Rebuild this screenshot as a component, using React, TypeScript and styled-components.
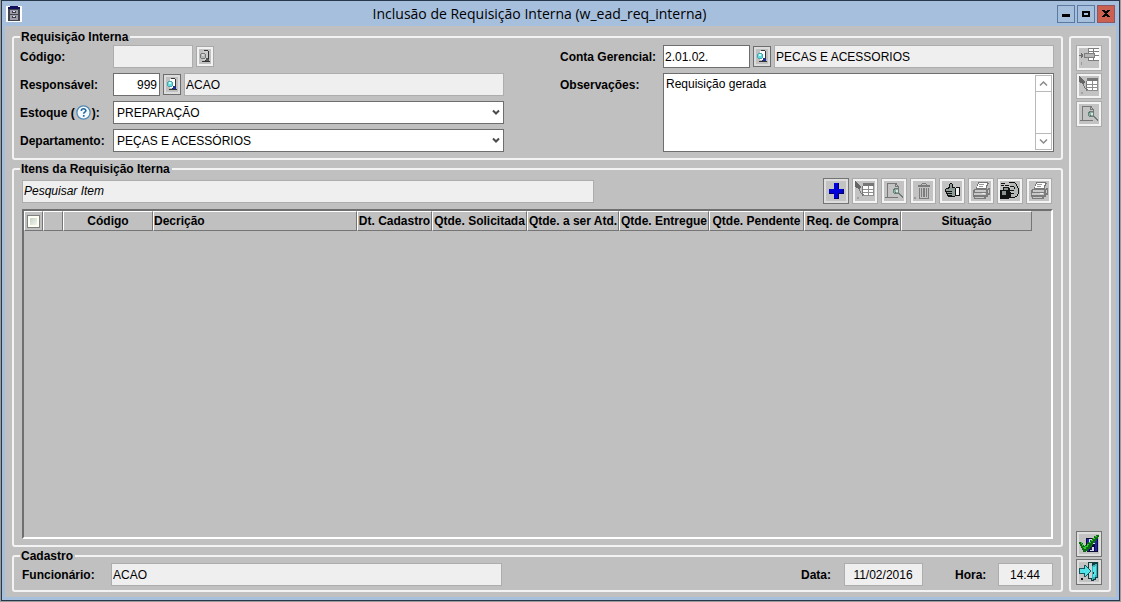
import React from "react";
import styled, { createGlobalStyle } from "styled-components";

const GlobalStyle = createGlobalStyle`
  *, *::before, *::after { box-sizing: border-box; }
  body {
    margin: 0;
    background: #9b9b9b;
    color: #000;
    font: 12px/14px "Liberation Sans", Arial, sans-serif;
  }
  button, input, select, textarea { font: inherit; color: inherit; }
`;

const AppWindow = styled.div`
  display: flex;
  flex-direction: column;
  min-height: calc(100vh - 1px);
  margin: 0 1px 1px;
  padding: 0 3px 3px;
  border: 1px solid #27374c;
  background: #a6bfdd;
`;

const TitleBar = styled.header`
  display: flex;
  align-items: center;
  height: 25px;
  padding: 0 1px;
`;

const Title = styled.h1`
  flex: 1;
  margin: 0;
  text-align: center;
  font: 400 14px/20px "Open Sans", "Noto Sans", sans-serif;
`;

const WindowButtons = styled.div`
  display: flex;
  gap: 2px;
`;

const WindowButton = styled.button<{ $close?: boolean }>`
  display: grid;
  place-items: center;
  width: 18px;
  height: 18px;
  padding: 0;
  border: 1px solid ${(p) => (p.$close ? "#8f5560" : "#5b789f")};
  background: ${(p) => (p.$close ? "#cb5f50" : "#a6bfdd")};
`;

const Body = styled.div`
  flex: 1;
  display: flex;
  gap: 6px;
  padding: 4px 5px 5px 7px;
  background: #c0c0c0;
`;

const Main = styled.main`
  flex: 1;
  min-width: 0;
  display: flex;
  flex-direction: column;
  gap: 2px;
`;

const Group = styled.fieldset<{ $grow?: boolean }>`
  flex: ${(p) => (p.$grow ? "1" : "none")};
  min-width: 0;
  margin: 0;
  padding: 0 7px 6px 6px;
  border: 2px solid #f3f3f3;
  border-radius: 3px;
`;

const Legend = styled.legend`
  padding: 0 2px 0 1px;
  font-weight: 700;
`;

const Sidebar = styled.aside`
  display: flex;
  flex-direction: column;
  gap: 2px;
  width: 42px;
  margin-top: 6px;
  padding: 7px 5px 5px;
  border: 2px solid #f3f3f3;
  border-radius: 3px;
`;

const SidebarSpacer = styled.div`
  flex: 1;
`;

const FormColumns = styled.div`
  display: grid;
  grid-template-columns: 484fr 494fr;
  column-gap: 56px;
  padding-top: 1px;
`;

const FormColumn = styled.div`
  display: flex;
  flex-direction: column;
  gap: 5px;
  min-width: 0;
`;

const FormRow = styled.div`
  display: flex;
  align-items: flex-start;
`;

const Label = styled.label<{ $width: number }>`
  flex: none;
  display: flex;
  align-items: center;
  width: ${(p) => p.$width}px;
  height: 23px;
  font-weight: 700;
  white-space: nowrap;
`;

const Fields = styled.div`
  flex: 1;
  min-width: 0;
  display: flex;
  align-items: center;
  gap: 3px;
`;

const TextInput = styled.input<{ $width?: number; $align?: string }>`
  flex: ${(p) => (p.$width ? "0 1 auto" : "1")};
  width: ${(p) => (p.$width ? `${p.$width}px` : "auto")};
  min-width: 0;
  height: 23px;
  padding: 0 2px 0 1px;
  border: 1px solid #6e6e6e;
  border-radius: 0;
  background: #fff;
  text-align: ${(p) => p.$align ?? "left"};
  &:read-only {
    border-color: #adadad;
    background: #efefef;
  }
  &::placeholder {
    color: #000;
    font-style: italic;
  }
`;

const SelectBox = styled.div`
  position: relative;
  flex: 1;
  min-width: 0;
  svg {
    position: absolute;
    right: 4px;
    top: 8px;
    pointer-events: none;
  }
`;

const Select = styled.select`
  display: block;
  appearance: none;
  width: 100%;
  height: 23px;
  padding: 0 20px 0 3px;
  border: 1px solid #6e6e6e;
  border-radius: 0;
  background: #fff;
`;

const LookupButton = styled.button`
  flex: none;
  display: grid;
  place-items: center;
  width: 18px;
  height: 21px;
  padding: 0;
  border: 1px solid #6e6e6e;
  background: #dcdcdc;
  &:disabled {
    border-color: #a8a8a8;
    background: #f2f2f2;
  }
`;

const HelpButton = styled.button`
  display: grid;
  padding: 0;
  margin: 0 1px;
  border: 0;
  background: none;
`;

const NotesBox = styled.div`
  flex: 1;
  min-width: 0;
  display: flex;
  height: 79px;
  padding: 1px;
  border: 1px solid #6e6e6e;
  background: #fff;
`;

const Notes = styled.textarea`
  flex: 1;
  min-width: 0;
  padding: 2px 1px;
  border: 0;
  background: none;
  resize: none;
  overflow: hidden;
`;

const ScrollTrack = styled.div`
  display: flex;
  flex-direction: column;
  justify-content: space-between;
  width: 17px;
  border: 1px solid #b9b9b9;
`;

const ScrollButton = styled.button<{ $end?: boolean }>`
  display: grid;
  place-items: center;
  height: 16px;
  padding: 0;
  border: 0 solid #b9b9b9;
  border-width: ${(p) => (p.$end ? "1px 0 0" : "0 0 1px")};
  background: #fff;
`;

const ItemsPanel = styled.div`
  display: flex;
  flex-direction: column;
  gap: 5px;
  height: 100%;
  padding: 2px 1px 0 2px;
`;

const Toolbar = styled.div`
  display: flex;
  align-items: center;
  justify-content: space-between;
  padding-right: 1px;
`;

const ToolButtons = styled.div`
  display: flex;
  gap: 3px;
`;

const ToolButton = styled.button<{ $raised?: boolean }>`
  flex: none;
  display: grid;
  place-items: center;
  width: 26px;
  height: 26px;
  padding: 0;
  border: 1px solid ${(p) => (p.$raised ? "#747474" : "#ababab")};
  background: #c3c3c3;
  box-shadow: inset 0 0 0 2px ${(p) => (p.$raised ? "#dedede" : "#f3f3f3")};
`;

const GridBox = styled.div`
  flex: 1;
  overflow: hidden;
  border: 2px solid;
  border-color: #6f6f6f #fff #fff #6f6f6f;
`;

const Grid = styled.table`
  width: 1008px;
  table-layout: fixed;
  border-collapse: separate;
  border-spacing: 0;
`;

const HeadCell = styled.th<{ $left?: boolean }>`
  height: 20px;
  padding: 0;
  border: 1px solid;
  border-color: #fff #757575 #757575 #fff;
  text-align: ${(p) => (p.$left ? "left" : "center")};
  white-space: nowrap;
`;

const CheckBox = styled.input`
  appearance: none;
  display: block;
  width: 13px;
  height: 13px;
  margin: 0 auto;
  border: 1px solid #7f7f7f;
  background: linear-gradient(135deg, #b9c8bd, #fffff8);
  box-shadow: inset 0 0 0 2px #fffff4;
`;

const FooterRow = styled.div`
  display: flex;
  justify-content: space-between;
  gap: 32px;
  padding: 0 1px 0 2px;
  margin-bottom: -2px;
`;

const FooterFields = styled.div`
  display: flex;
  gap: 32px;
`;

const FooterField = styled.div`
  display: flex;
  min-width: 0;
`;

const Svg = ({ size = 20, w, h, children }: { size?: number; w?: number; h?: number; children: React.ReactNode }) => (
  <svg width={w ?? size} height={h ?? size} viewBox={`0 0 ${w ?? size} ${h ?? size}`} shapeRendering="crispEdges" aria-hidden="true">
    {children}
  </svg>
);

const CabinetIcon = () => (
  <Svg w={16} h={16}>
    <path fill="#fff" d="M0 0h16v16H0z" />
    <path fill="#10105c" d="M4 0h8v1h2v2H2V1h2z" />
    <path fill="#44444e" d="M2 3h12v12H2z" />
    <path fill="#9c9cab" d="M4 4h8v4H4zM4 9h8v5H4z" />
    <path fill="#3c3c46" d="M6 5h4v2H6zM6 10h4v2H6z" />
    <path fill="#e3e3ec" d="M7 5h2v1H7zM7 10h2v1H7z" />
  </Svg>
);

const ChevronIcon = () => (
  <svg width="8" height="7" viewBox="0 0 8 7" aria-hidden="true">
    <path d="M1 1.5 4 4.5 7 1.5" fill="none" stroke="#4b4b4b" strokeWidth="2" />
  </svg>
);

const ScrollArrow = ({ up }: { up?: boolean }) => (
  <svg width="9" height="7" viewBox="0 0 9 7" aria-hidden="true">
    <path d={up ? "M1 5.5 4.5 2 8 5.5" : "M1 1.5 4.5 5 8 1.5"} fill="none" stroke="#8a8a8a" strokeWidth="1.5" />
  </svg>
);

const HelpIcon = () => (
  <svg width="15" height="15" viewBox="0 0 15 15" aria-hidden="true">
    <circle cx="7.5" cy="7.5" r="6.6" fill="#f3f9fd" stroke="#5289b4" strokeWidth="1.3" />
    <path d="M5.3 6c0-3 4.6-2.8 4.6-.3 0 1.5-2.2 1.5-2.2 3.1" fill="none" stroke="#2468a0" strokeWidth="1.6" />
    <path d="M6.9 10h1.7v1.7H6.9z" fill="#2468a0" />
  </svg>
);

const LookupIcon = ({ muted }: { muted?: boolean }) => (
  <Svg w={12} h={15}>
    <path fill="#c0c0c0" d="M0 0h12v15H0z" />
    <path fill={muted ? "#cdcdcd" : "#fff"} d="M4 2h5v1h1v8H4z" />
    <path fill="#333" d="M5 1h4v1H5zM9 2h1v1H9zM9 3h1v8H9zM7 10h1v1H7zM6 11h1v1H6zM3 12h8v1H3z" />
    <path fill={muted ? "#777" : "#4aa5ae"} d="M2 4h4v1H2zM1 5h1v4H1zM6 5h1v4H6zM2 9h4v1H2z" />
    <path fill={muted ? "#b4bab6" : "#5fe0df"} d="M2 5h4v4H2z" />
    <path fill={muted ? "#d8d8d8" : "#d6ffff"} d="M3 5h2v2H3z" />
    <path fill={muted ? "#555" : "#1b2f9c"} d="M7 9h2v1h1v2H7z" />
  </Svg>
);

const InsertRowIcon = () => (
  <Svg>
    <path fill="#fff" d="M9 1h11v12H9z" />
    <path fill="#7d7d7d" d="M9 0h11v1H9zM9 3h11v1H9zM9 12h11v1H9zM9 0h1v13H9zM14 0h1v13h-1zM16 7h4v1h-4z" />
    <path fill="#7d7d7d" d="M5 5h11v5H5z" />
    <path fill="#b5b5b5" d="M6 6h9v3H6z" />
    <path fill="#6c6c6c" d="M0 7h2V5h1v1h1v3H3v1H2V8H0z" />
    <path fill="#999" d="M2 14h1v3H2z" />
  </Svg>
);

const EditRowIcon = () => (
  <Svg>
    <path fill="#777" d="M8 2h11v3H8zM7 5h1v10H7z" />
    <path fill="#fff" d="M8 5h11v10H8z" />
    <path fill="#8e8e8e" d="M8 8h11v1H8zM8 11h11v1H8zM8 14h11v1H8zM13 5h1v10h-1zM18 5h1v10h-1z" />
    <path fill="#666" d="M0 0h1v1h1v1h1v1h1v1h1v1h1v2H5v1H3V7H1V6H0z" />
    <path fill="#777" d="M4 8h1v2H4zM5 10h1v2H5zM6 12h2v1H6zM8 13h1v1H8z" />
    <path fill="#a2a2a2" d="M2 16h2v2H2z" />
  </Svg>
);

const PreviewIcon = () => (
  <Svg>
    <path fill="#777" d="M3 2h10v1H3zM3 2h1v14H3zM1 16h13v1H1zM12 3h1v1h-1zM13 4h1v1h-1zM14 5h1v3h-1zM11 3h1v3h-1zM11 5h3v1h-3z" />
    <path fill="#6f7c77" d="M10 7h4v1h-4zM9 8h1v4H9zM14 8h1v4h-1zM10 12h5v1h-5zM15 12h1v1h-1zM16 13h1v1h-1zM17 14h1v1h-1zM18 15h1v2h-1zM15 13h1v1h-1zM16 14h1v1h-1zM17 15h1v1h-1z" />
    <path fill="#8cafa4" d="M10 8h4v4h-4z" />
    <path fill="#d4e7e0" d="M12 9h2v2h-2z" />
    <path fill="#3a7a66" d="M10 8h1v1h-1zM11 11h1v1h-1z" />
  </Svg>
);

const PlusIcon = () => (
  <Svg>
    <path fill="#00006c" d="M8 2h5v6h5v5h-5v5H8v-5H3V8h5z" />
    <path fill="#0000d8" d="M8 2h4v6h5v4h-5v5H8v-5H3V8h5z" />
  </Svg>
);

const TrashIcon = () => (
  <Svg>
    <path fill="#7c7c7c" d="M9 2h4v1H9zM8 3h1v1H8zM13 3h1v1h-1zM5 4h12v2H5zM6 7h1v10H6zM15 7h1v10h-1zM6 17h10v1H6zM8 7h1v9H8zM10 7h2v9h-2zM13 7h1v9h-1z" />
    <path fill="#999" d="M1 16h2v2H1z" />
  </Svg>
);

const HandIcon = () => (
  <Svg>
    <path fill="#111" d="M8 2h2v1h1v3h2v1h1v8h-1v1H6v-1H5v-2H4v-2H3V8h1V7h2V6h1V3h1z" />
    <path fill="#8d9c94" d="M8 3h2v4h3v1h-6V7h1zM4 8h9v2H4zM5 11h8v1H5zM6 13h7v1H6zM10 8h3v7h-3z" />
    <path fill="#111" d="M14 6h4v9h-4z" />
    <path fill="#f3f3f3" d="M14 7h3v7h-3z" />
  </Svg>
);

const PrinterIcon = () => (
  <Svg>
    <path fill="#777" d="M7 1h10v1h1v1h-1v2h-1v3H5V6h1V3h1z" />
    <path fill="#fff" d="M8 2h8v2h-1v3H6V5h1V3h1z" />
    <path fill="#999" d="M8 3h5v1H8zM8 5h4v1H8z" />
    <path fill="#7b7b7b" d="M3 8h14v-1h2v7h-2v2h-2v2H3v-2H2V9h1z" />
    <path fill="#c8c8c8" d="M4 9h11v2H4zM3 12h12v2H3zM4 16h9v1H4zM17 9h1v3h-1z" />
    <path fill="#eee" d="M11 12h3v1h-3z" />
  </Svg>
);

const PackageHandIcon = () => (
  <Svg>
    <path fill="#111" d="M1 2h4v1H1zM1 4h3v1H1zM5 4h4v1H5zM9 1h6v1H9zM15 2h1v1h-1zM16 3h1v2h-1zM17 5h1v2h-1zM18 7h1v6h-1zM17 13h1v2h-1zM15 15h2v1h-2zM9 16h6v1H9zM0 16h9v2H0zM0 9h1v8H0z" />
    <path fill="#111" d="M3 6h6v1h1v4h1v5H1V9h2z" />
    <path fill="#b4b8b6" d="M10 2h5v1h1v2h1v2h1v6h-1v2h-2v1h-4v-4h3v-1h-3V7h3V6h-4z" />
    <path fill="#8a938f" d="M4 7h4v2H4zM2 10h4v4H2z" />
    <path fill="#111" d="M10 5h4v1h-4zM14 6h1v2h-1zM9 9h5v1H9zM10 12h4v1h-4z" />
  </Svg>
);

const SaveIcon = () => (
  <Svg>
    <path fill="#0a0a35" d="M7 4h12v14H8v-1H7z" />
    <path fill="#2222b0" d="M8 5h2v12H8zM16 5h2v12h-2z" />
    <path fill="#d9d9ec" d="M10 5h6v5h-6zM11 13h4v4h-4z" />
    <path fill="#20204e" d="M11 13h2v3h-2z" />
    <path fill="#0c6a14" d="M0 8h3v1h1v2h1v1h1v-1h2V9h1V8h2V6h2V4h2V2h2V1h3v2h-1v2h-2v2h-1v2h-2v2h-1v2h-2v2H9v2H7v1H4v-2H3v-2H2v-2H1v-2H0z" />
    <path fill="#31c92f" d="M1 8h2v2h1v3h2v-1h2v-2h2V8h2V6h2V4h2V2h2v1h-2v2h-2v2h-2v2h-2v2H9v2H7v2H5v-1H4v-2H3v-2H2v-2H1z" />
  </Svg>
);

const ExitIcon = () => (
  <Svg>
    <path fill="#123c40" d="M9 0h10v16h-2v2h-2v1h-3v-2H9z" />
    <path fill="#c9d2d2" d="M10 1h3v15h-3z" />
    <path fill="#2fb5bb" d="M13 4h1V3h2V2h2v13h-2v2h-2v1h-1z" />
    <path fill="#5de3e6" d="M14 5h2V4h1v9h-1v2h-2z" />
    <path fill="#102c30" d="M14 10h1v2h-1z" />
    <path fill="#14565c" d="M5 3h2v1h1v1h1v1h1v1h1v1h1v2h-1v1h-1v1H9v1H8v1H7v1H5v-3H0V6h5z" />
    <path fill="#52e4e8" d="M6 4h1v1h1v1h1v1h1v1h1v2h-1v1H9v1H8v1H7v1H6v-3H1V7h5z" />
    <path fill="#111" d="M2 16h2v2H2z" />
  </Svg>
);

const columns: { label: string; width: number; left?: boolean }[] = [
  { label: "", width: 20 },
  { label: "Código", width: 90 },
  { label: "Decrição", width: 204, left: true },
  { label: "Dt. Cadastro", width: 75 },
  { label: "Qtde. Solicitada", width: 95 },
  { label: "Qtde. a ser Atd.", width: 92 },
  { label: "Qtde. Entregue", width: 90 },
  { label: "Qtde. Pendente", width: 95 },
  { label: "Req. de Compra", width: 97 },
  { label: "Situação", width: 131 },
];

const itemTools: { label: string; icon: React.ReactNode; raised?: boolean }[] = [
  { label: "Adicionar item", icon: <PlusIcon />, raised: true },
  { label: "Editar item", icon: <EditRowIcon /> },
  { label: "Visualizar item", icon: <PreviewIcon /> },
  { label: "Excluir item", icon: <TrashIcon /> },
  { label: "Atender item", icon: <HandIcon /> },
  { label: "Imprimir", icon: <PrinterIcon /> },
  { label: "Entregar item", icon: <PackageHandIcon /> },
  { label: "Imprimir requisição", icon: <PrinterIcon /> },
];

export default function App() {
  return (
    <>
      <GlobalStyle />
      <AppWindow>
        <TitleBar>
          <CabinetIcon />
          <Title>Inclusão de Requisição Interna (w_ead_req_interna)</Title>
          <WindowButtons>
            <WindowButton aria-label="Minimizar">
              <Svg w={10} h={8}><path d="M1 4h8v3H1z" /></Svg>
            </WindowButton>
            <WindowButton aria-label="Maximizar">
              <Svg w={10} h={8}><path fillRule="evenodd" d="M1 1h8v6H1zM3 3v2h4V3z" /></Svg>
            </WindowButton>
            <WindowButton $close aria-label="Fechar">
              <Svg w={10} h={8}><path d="M1 0h3v1h2V0h3v1H8v1H7v1H6v1h1v1h1v1h1v1H6V6H4v1H1V6h1V5h1V4h1V3H3V2H2V1H1z" /></Svg>
            </WindowButton>
          </WindowButtons>
        </TitleBar>

        <Body>
          <Main>
            <Group>
              <Legend>Requisição Interna</Legend>
              <FormColumns>
                <FormColumn>
                  <FormRow>
                    <Label $width={93} htmlFor="codigo">Código:</Label>
                    <Fields>
                      <TextInput id="codigo" $width={80} readOnly />
                      <LookupButton disabled aria-label="Buscar código"><LookupIcon muted /></LookupButton>
                    </Fields>
                  </FormRow>
                  <FormRow>
                    <Label $width={93} htmlFor="responsavel">Responsável:</Label>
                    <Fields>
                      <TextInput id="responsavel" $width={47} $align="right" defaultValue="999" />
                      <LookupButton aria-label="Buscar responsável"><LookupIcon /></LookupButton>
                      <TextInput aria-label="Nome do responsável" readOnly value="ACAO" />
                    </Fields>
                  </FormRow>
                  <FormRow>
                    <Label $width={93} as="div">
                      <label htmlFor="estoque">Estoque (</label>
                      <HelpButton aria-label="Ajuda"><HelpIcon /></HelpButton>
                      <span>):</span>
                    </Label>
                    <SelectBox>
                      <Select id="estoque"><option>PREPARAÇÃO</option></Select>
                      <ChevronIcon />
                    </SelectBox>
                  </FormRow>
                  <FormRow>
                    <Label $width={93} htmlFor="departamento">Departamento:</Label>
                    <SelectBox>
                      <Select id="departamento"><option>PEÇAS E ACESSÓRIOS</option></Select>
                      <ChevronIcon />
                    </SelectBox>
                  </FormRow>
                </FormColumn>

                <FormColumn>
                  <FormRow>
                    <Label $width={103} htmlFor="conta">Conta Gerencial:</Label>
                    <Fields>
                      <TextInput id="conta" $width={87} defaultValue="2.01.02." />
                      <LookupButton aria-label="Buscar conta"><LookupIcon /></LookupButton>
                      <TextInput aria-label="Descrição da conta" readOnly value="PECAS E ACESSORIOS" />
                    </Fields>
                  </FormRow>
                  <FormRow>
                    <Label $width={103} htmlFor="observacoes">Observações:</Label>
                    <NotesBox>
                      <Notes id="observacoes" defaultValue="Requisição gerada" />
                      <ScrollTrack>
                        <ScrollButton aria-label="Rolar para cima"><ScrollArrow up /></ScrollButton>
                        <ScrollButton $end aria-label="Rolar para baixo"><ScrollArrow /></ScrollButton>
                      </ScrollTrack>
                    </NotesBox>
                  </FormRow>
                </FormColumn>
              </FormColumns>
            </Group>

            <Group $grow>
              <Legend>Itens da Requisição Iterna</Legend>
              <ItemsPanel>
                <Toolbar>
                  <TextInput $width={572} readOnly placeholder="Pesquisar Item" aria-label="Pesquisar Item" />
                  <ToolButtons>
                    {itemTools.map((tool) => (
                      <ToolButton key={tool.label} $raised={tool.raised} aria-label={tool.label}>
                        {tool.icon}
                      </ToolButton>
                    ))}
                  </ToolButtons>
                </Toolbar>
                <GridBox>
                  <Grid>
                    <colgroup>
                      <col width={19} />
                      {columns.map((c, i) => <col key={i} width={c.width} />)}
                    </colgroup>
                    <thead>
                      <tr>
                        <HeadCell><CheckBox type="checkbox" aria-label="Selecionar todos" /></HeadCell>
                        {columns.map((c, i) => <HeadCell key={i} $left={c.left}>{c.label}</HeadCell>)}
                      </tr>
                    </thead>
                  </Grid>
                </GridBox>
              </ItemsPanel>
            </Group>

            <Group>
              <Legend>Cadastro</Legend>
              <FooterRow>
                <FooterField>
                  <Label $width={89} htmlFor="funcionario">Funcionário:</Label>
                  <TextInput id="funcionario" $width={391} readOnly value="ACAO" />
                </FooterField>
                <FooterFields>
                  <FooterField>
                    <Label $width={43} htmlFor="data">Data:</Label>
                    <TextInput id="data" $width={79} $align="center" readOnly value="11/02/2016" />
                  </FooterField>
                  <FooterField>
                    <Label $width={43} htmlFor="hora">Hora:</Label>
                    <TextInput id="hora" $width={55} $align="center" readOnly value="14:44" />
                  </FooterField>
                </FooterFields>
              </FooterRow>
            </Group>
          </Main>

          <Sidebar>
            <ToolButton aria-label="Inserir linha"><InsertRowIcon /></ToolButton>
            <ToolButton aria-label="Editar linha"><EditRowIcon /></ToolButton>
            <ToolButton aria-label="Visualizar"><PreviewIcon /></ToolButton>
            <SidebarSpacer />
            <ToolButton $raised aria-label="Salvar"><SaveIcon /></ToolButton>
            <ToolButton $raised aria-label="Sair"><ExitIcon /></ToolButton>
          </Sidebar>
        </Body>
      </AppWindow>
    </>
  );
}
